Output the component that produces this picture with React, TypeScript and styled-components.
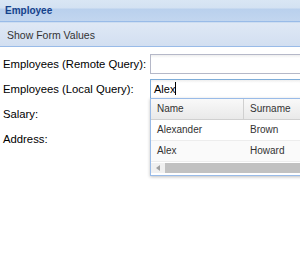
import React from 'react'
import styled, { createGlobalStyle } from 'styled-components'

const GlobalStyle = createGlobalStyle`
    html, body {
        margin: 0;
        padding: 0;
        background: #fff;
    }
    body {
        font-family: "Liberation Sans", Arial, sans-serif;
    }
`

const Panel = styled.div`
    width: 300px;
    height: 269px;
    overflow: hidden;
    background: #fff;
`

const Header = styled.div`
    height: 22px;
    box-sizing: border-box;
    border-bottom: 1px solid #99bbe8;
    background: linear-gradient(to bottom, #d9e6f4 0, #d3e1f2 40%, #b9d0ed 41%, #c2d6ef 100%);
    padding: 4px 5px 0;
    font-size: 10px;
    font-weight: bold;
    color: #15428b;
    line-height: 13px;
`

const Toolbar = styled.div`
    height: 25px;
    box-sizing: border-box;
    border-bottom: 1px solid #99bbe8;
    border-top: 1px solid #cdddf1;
    background: linear-gradient(to bottom, #dfe8f5, #d2dff1);
    display: flex;
    align-items: center;
    padding: 0 7px;
`

const ToolButton = styled.span`
    font-size: 10.5px;
    color: #333;
`

const Form = styled.div`
    position: relative;
    padding: 7px 0 0 3px;
    display: grid;
    grid-template-columns: 147px 1fr;
    grid-auto-rows: 25px;
`

const Label = styled.label`
    font-size: 11.3px;
    color: #000;
    line-height: 20px;
    white-space: nowrap;
`

const Input = styled.div<{ $focused?: boolean }>`
    height: 20px;
    box-sizing: border-box;
    margin-right: -20px;
    border: 1px solid ${p => (p.$focused ? '#7eadd9' : '#b5b8c8')};
    background: linear-gradient(to bottom, #eeeeee 0, #ffffff 3px);
    font-size: 11px;
    line-height: 18px;
    padding-left: 3px;
    color: #000;
`

const Caret = styled.span`
    display: inline-block;
    width: 1px;
    height: 13px;
    background: #000;
    vertical-align: -2px;
`

const Dropdown = styled.div`
    position: absolute;
    left: 150px;
    top: 51px;
    width: 170px;
    height: 78px;
    box-sizing: border-box;
    border: 1px solid #99bbe8;
    background: #fff;
    box-shadow: 0 1px 3px rgba(0, 0, 0, 0.25);
    display: flex;
    flex-direction: column;
`

const GridRow = styled.div<{ $alt?: boolean; $head?: boolean }>`
    display: grid;
    grid-template-columns: 93px 1fr;
    height: 21px;
    flex: none;
    box-sizing: border-box;
    border-bottom: 1px solid ${p => (p.$head ? '#d0d0d0' : '#ededed')};
    background: ${p =>
        p.$head ? 'linear-gradient(to bottom, #f9f9f9, #e9e9e9)' : p.$alt ? '#fafafa' : '#fff'};
    font-size: 10px;
    color: #333;
    line-height: 20px;
`

const Cell = styled.div<{ $head?: boolean }>`
    padding-left: 6px;
    border-right: ${p => (p.$head ? '1px solid #d0d0d0' : 'none')};
`

const Scrollbar = styled.div`
    margin-top: 1px;
    height: 10px;
    flex: none;
    display: flex;
    align-items: center;
    background: #f0f0f0;
`

const ScrollArrow = styled.div`
    width: 14px;
    display: flex;
    justify-content: center;
    align-items: center;
`

const Thumb = styled.div`
    flex: 1;
    height: 10px;
    background: #c1c1c1;
`

const rows = [
    { name: 'Alexander', surname: 'Brown' },
    { name: 'Alex', surname: 'Howard' },
]

const App = () => {
    return (
        <>
            <GlobalStyle />
            <Panel>
                <Header>Employee</Header>
                <Toolbar>
                    <ToolButton>Show Form Values</ToolButton>
                </Toolbar>
                <Form>
                    <Label>Employees (Remote Query):</Label>
                    <Input />
                    <Label>Employees (Local Query):</Label>
                    <Input $focused>
                        Alex<Caret />
                    </Input>
                    <Label>Salary:</Label>
                    <div />
                    <Label>Address:</Label>
                    <div />

                    <Dropdown>
                        <GridRow $head>
                            <Cell $head>Name</Cell>
                            <Cell>Surname</Cell>
                        </GridRow>
                        {rows.map((r, i) => (
                            <GridRow key={r.name} $alt={i % 2 === 1}>
                                <Cell>{r.name}</Cell>
                                <Cell>{r.surname}</Cell>
                            </GridRow>
                        ))}
                        <Scrollbar>
                            <ScrollArrow>
                                <svg width="4" height="6" viewBox="0 0 4 6">
                                    <path d="M4 0 L0 3 L4 6 Z" fill="#a0a0a0" />
                                </svg>
                            </ScrollArrow>
                            <Thumb />
                        </Scrollbar>
                    </Dropdown>
                </Form>
            </Panel>
        </>
    )
}

export default App
